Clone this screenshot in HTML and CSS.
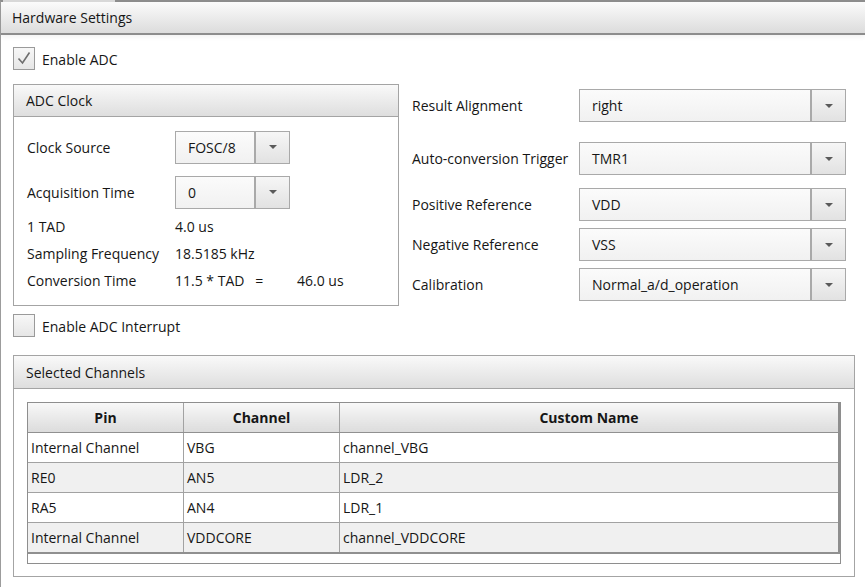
FILE: index.html
```html
<!DOCTYPE html>
<html>
<head>
<meta charset="utf-8">
<title>Hardware Settings</title>
<link rel="stylesheet" href="styles.css">
</head>
<body>
<div class="window">
  <div class="titlebar"><span class="tab-edge"></span>Hardware Settings</div>
  <div class="content">
    <div class="check-row">
      <span class="checkbox"><svg width="20" height="21" viewBox="0 0 20 21"><path d="M4.5 10.5 L8.5 15 L15.5 4.5" fill="none" stroke="#6e6e6e" stroke-width="1.6"/></svg></span>
      <span class="ctext">Enable ADC</span>
    </div>

    <div class="middle">
      <div class="left-col">
        <section class="group clock">
          <div class="group-head">ADC Clock</div>
          <div class="group-body">
            <div class="field">
              <span class="lbl">Clock Source</span>
              <div class="combo small"><span class="val">FOSC/8</span><span class="btn"><i class="arrow"></i></span></div>
            </div>
            <div class="field second">
              <span class="lbl">Acquisition Time</span>
              <div class="combo small"><span class="val">0</span><span class="btn"><i class="arrow"></i></span></div>
            </div>
            <div class="info first"><span class="lbl">1 TAD</span><span>4.0 us</span></div>
            <div class="info"><span class="lbl">Sampling Frequency</span><span>18.5185 kHz</span></div>
            <div class="info"><span class="lbl">Conversion Time</span><span class="eq">11.5 * TAD&nbsp;&nbsp;&nbsp;=</span><span>46.0 us</span></div>
          </div>
        </section>
        <div class="check-row interrupt">
          <span class="checkbox"></span>
          <span class="ctext">Enable ADC Interrupt</span>
        </div>
      </div>

      <div class="right-col">
        <div class="rfield r1"><span class="rlbl">Result Alignment</span><div class="combo wide"><span class="val">right</span><span class="btn"><i class="arrow"></i></span></div></div>
        <div class="rfield r2"><span class="rlbl">Auto-conversion Trigger</span><div class="combo wide"><span class="val">TMR1</span><span class="btn"><i class="arrow"></i></span></div></div>
        <div class="rfield r3"><span class="rlbl">Positive Reference</span><div class="combo wide"><span class="val">VDD</span><span class="btn"><i class="arrow"></i></span></div></div>
        <div class="rfield r4"><span class="rlbl">Negative Reference</span><div class="combo wide"><span class="val">VSS</span><span class="btn"><i class="arrow"></i></span></div></div>
        <div class="rfield r5"><span class="rlbl">Calibration</span><div class="combo wide"><span class="val">Normal_a/d_operation</span><span class="btn"><i class="arrow"></i></span></div></div>
      </div>
    </div>

    <section class="group channels">
      <div class="group-head">Selected Channels</div>
      <div class="group-body">
        <div class="grid">
          <table>
            <thead>
              <tr><th class="c1">Pin</th><th class="c2">Channel</th><th class="c3">Custom Name</th></tr>
            </thead>
            <tbody>
              <tr><td>Internal Channel</td><td>VBG</td><td>channel_VBG</td></tr>
              <tr class="alt"><td>RE0</td><td>AN5</td><td>LDR_2</td></tr>
              <tr><td>RA5</td><td>AN4</td><td>LDR_1</td></tr>
              <tr class="alt"><td>Internal Channel</td><td>VDDCORE</td><td>channel_VDDCORE</td></tr>
            </tbody>
          </table>
        </div>
      </div>
    </section>
  </div>
</div>
</body>
</html>
```
FILE: styles.css
```css
html, body {
  margin: 0;
  padding: 0;
}
body {
  width: 865px;
  height: 587px;
  overflow: hidden;
  background: #ffffff;
  font-family: "Open Sans", "Noto Sans", "DejaVu Sans", sans-serif;
  font-size: 14px;
  color: #161616;
}
.window {
  box-sizing: border-box;
  height: 587px;
  border-left: 1px solid #9c9c9c;
  border-top: 2px solid #8e8e8e;
}
.titlebar {
  position: relative;
  height: 31px;
  padding-left: 11px;
  display: flex;
  align-items: center;
  background: linear-gradient(#fbfbfb, #dcdcdc);
  border-bottom: 2px solid #8c8c8c;
  box-shadow: 0 2px 5px rgba(0, 0, 0, 0.06);
}
.tab-edge {
  position: absolute;
  left: 2px;
  top: -2px;
  width: 112px;
  height: 2px;
  background: #d8d8d8;
}
.content {
  padding: 12px 0 0 12px;
}
.check-row {
  display: flex;
  align-items: center;
  gap: 7px;
  height: 23px;
}
.ctext {
  padding-top: 2px;
}
.checkbox {
  box-sizing: border-box;
  width: 22px;
  height: 23px;
  border: 1px solid #9a9a9a;
  background: linear-gradient(#f7f7f7, #e6e6e6);
  display: flex;
}
.middle {
  margin-top: 14px;
  display: flex;
  gap: 13px;
}
.left-col {
  width: 386px;
}
.group {
  box-sizing: border-box;
  border: 1px solid #a4a4a4;
}
.group-head {
  height: 31px;
  padding-left: 12px;
  display: flex;
  align-items: center;
  background: linear-gradient(#f9f9f9, #dedede);
  border-bottom: 1px solid #a4a4a4;
}
.clock {
  height: 222px;
}
.clock .group-body {
  padding: 14px 13px 0 13px;
}
.field {
  display: flex;
  align-items: center;
  height: 32px;
}
.field.second {
  margin-top: 13px;
}
.lbl {
  width: 148px;
  flex: none;
}
.info {
  display: flex;
  line-height: 27px;
}
.info.first {
  margin-top: 5px;
}
.eq {
  width: 122px;
}
.combo {
  box-sizing: border-box;
  height: 33px;
  display: flex;
  border: 1px solid #a9a9a9;
  background: linear-gradient(#fbfbfb, #f1f1f1);
}
.combo .val {
  flex: 1;
  padding-left: 12px;
  display: flex;
  align-items: center;
}
.combo .btn {
  width: 33px;
  flex: none;
  border-left: 2px solid #a9a9a9;
  background: linear-gradient(#f6f6f6, #e2e2e2);
  display: flex;
  align-items: center;
  justify-content: center;
}
.arrow {
  width: 0;
  height: 0;
  border-left: 4px solid transparent;
  border-right: 4px solid transparent;
  border-top: 4px solid #5a5a5a;
}
.combo.small {
  width: 115px;
}
.combo.wide {
  width: 267px;
}
.interrupt {
  margin-top: 8px;
}
.right-col {
  width: 434px;
}
.rfield {
  display: flex;
  align-items: center;
  height: 33px;
}
.rlbl {
  width: 167px;
  flex: none;
}
.r1 { margin-top: 5px; }
.r2 { margin-top: 20px; }
.r3 { margin-top: 13px; }
.r4 { margin-top: 7px; }
.r5 { margin-top: 7px; }

.channels {
  margin-top: 18px;
  width: 842px;
  height: 222px;
}
.channels .group-head {
  height: 32px;
}
.channels .group-body {
  padding: 13px 13px 0 13px;
}
.grid {
  box-sizing: border-box;
  width: 814px;
  border: 1px solid #8e8e8e;
  padding-bottom: 9px;
  background: #ffffff;
}
table {
  width: 100%;
  border-collapse: collapse;
  table-layout: fixed;
}
th, td {
  padding: 0 0 0 3px;
  border: 1px solid #a2a2a2;
  height: 29px;
  text-align: left;
  white-space: nowrap;
}
tr > :first-child { border-left: none; }
tr > :last-child { border-right: 2px solid #8e8e8e; }
thead th {
  border-top: none;
  border-bottom: 1px solid #909090;
  text-align: center;
  font-weight: 700;
  padding: 0;
  background: linear-gradient(#f8f8f8, #dcdcdc);
}
th.c1 { width: 155px; }
th.c2 { width: 155px; }
tbody tr:last-child td {
  border-bottom: 2px solid #909090;
}
tr.alt td {
  background: #f0f0f0;
}
```
